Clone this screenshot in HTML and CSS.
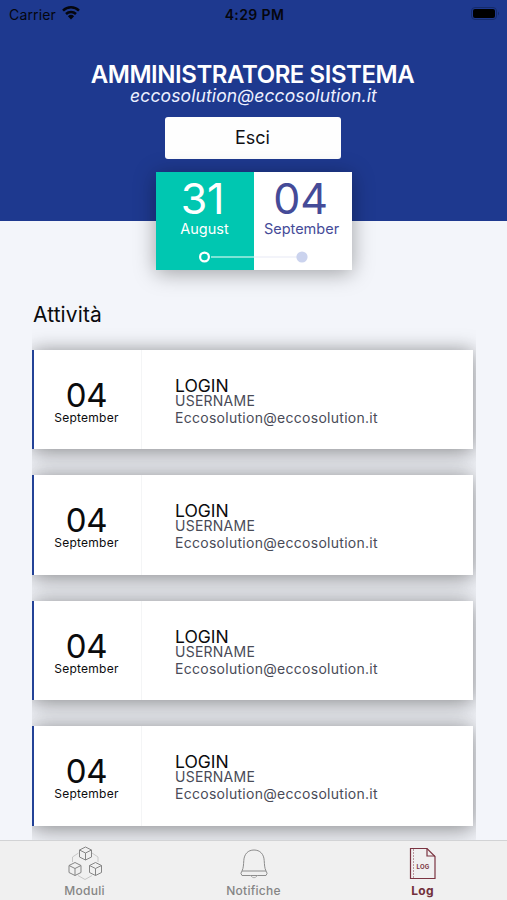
FILE: index.html
```html
<!DOCTYPE html>
<html lang="it">
<head>
<meta charset="utf-8">
<title>Log</title>
<link rel="stylesheet" href="styles.css">
</head>
<body>
<div class="app">
  <header class="hero">
    <div class="status">
      <span class="carrier">Carrier
        <svg class="wifi" width="18" height="14" viewBox="0 0 18 14" fill="none" stroke="#05060d" stroke-width="2.5"><path d="M1 4.6a11.5 11.5 0 0 1 16 0"/><path d="M4 8a7.2 7.2 0 0 1 10 0"/><path d="M9 13.4 5.9 10.3a4.5 4.5 0 0 1 6.2 0z" fill="#05060d" stroke="none"/></svg>
      </span>
      <span class="clock">4:29 PM</span>
      <svg class="battery" width="29" height="14" viewBox="0 0 29 14"><rect x=".5" y=".5" width="25" height="12" rx="3.5" fill="none" stroke="#152b6b"/><rect x="2" y="2" width="22" height="9" rx="2" fill="#000"/><path d="M27 4.5q2 2 0 4z" fill="#152b6b"/></svg>
    </div>
    <h1 class="name">AMMINISTRATORE SISTEMA</h1>
    <p class="mail">eccosolution@eccosolution.it</p>
    <button class="exit">Esci</button>
    <div class="range">
      <div class="day from"><span class="num">31</span><span class="month">August</span></div>
      <div class="day to"><span class="num">04</span><span class="month">September</span></div>
      <svg class="track" width="110" height="12" viewBox="0 0 110 12"><path d="M12 6h43" stroke="#a5eee3" stroke-width="1.5"/><path d="M55 6h43" stroke="#eff1f8" stroke-width="1.5"/><circle cx="5.500" cy="6" r="4.4" fill="#00c7b1" stroke="#fff" stroke-width="2.2"/><circle cx="103" cy="6" r="5.600" fill="#cbd3ee"/></svg>
    </div>
  </header>
  <main class="content">
    <h2 class="heading">Attività</h2>
    <div class="list">
      <article class="card"><div class="date"><span class="date-num">04</span><span class="date-month">September</span></div><div class="info"><h3>LOGIN</h3><p class="label">USERNAME</p><p class="value">Eccosolution@eccosolution.it</p></div></article>
      <article class="card"><div class="date"><span class="date-num">04</span><span class="date-month">September</span></div><div class="info"><h3>LOGIN</h3><p class="label">USERNAME</p><p class="value">Eccosolution@eccosolution.it</p></div></article>
      <article class="card"><div class="date"><span class="date-num">04</span><span class="date-month">September</span></div><div class="info"><h3>LOGIN</h3><p class="label">USERNAME</p><p class="value">Eccosolution@eccosolution.it</p></div></article>
      <article class="card"><div class="date"><span class="date-num">04</span><span class="date-month">September</span></div><div class="info"><h3>LOGIN</h3><p class="label">USERNAME</p><p class="value">Eccosolution@eccosolution.it</p></div></article>
    </div>
  </main>
  <nav class="tabs">
    <a class="tab">
      <svg width="36" height="36" viewBox="0 0 36 36" fill="none" stroke="#858585" stroke-width="1" stroke-linejoin="round">
        <defs><path id="cube" d="M0-6.500 6-3.500V3.500L0 6.500-6 3.500V-3.500zM-6-3.500 0-.5 6-3.500M0-.5V6.500"/></defs>
        <path d="M11.500 8 5.500 12v5M25 8l6 4v5M11 30.500l7 4 7-4" stroke="#bcbcbc" stroke-width=".8"/>
        <use href="#cube" x="18.500" y="8.500"/><use href="#cube" x="8" y="24"/><use href="#cube" x="28.500" y="24"/>
      </svg>
      <span>Moduli</span>
    </a>
    <a class="tab">
      <svg width="36" height="36" viewBox="0 0 36 36" fill="none" stroke="#8c8c8c" stroke-width="1" stroke-linejoin="round"><path d="M6 26C7.500 23 7.500 19.500 7.800 15.500 8.200 9 12 5 18 5s9.800 4 10.200 10.500c.3 4 .3 7.500 1.800 10.500"/><path d="M6 26h24q2.200 2.300 0 4.500H6q-2.200-2.200 0-4.500z"/><path d="M14.500 30.500q3.500 4.500 7 0" stroke="#b0b0b0"/></svg>
      <span>Notifiche</span>
    </a>
    <a class="tab active">
      <svg width="36" height="36" viewBox="0 0 36 36" fill="none" stroke="#7b3441" stroke-width="1.200"><path d="M5.500 3.500h16.500l8 8V33.500H5.500z"/><path d="M22 3.500v7.500h8"/><path d="M8.500 4v29" stroke-width=".8" stroke-dasharray="2 1" opacity=".6"/><text class="log-text" x="18" y="23.500" text-anchor="middle">LOG</text></svg>
      <span>Log</span>
    </a>
  </nav>
</div>
</body>
</html>
```
FILE: styles.css
```css
* { box-sizing: border-box; margin: 0; padding: 0; }
body { font-family: Inter, "Liberation Sans", sans-serif; background: #f3f5fa; color: #0b0b0d; }
.app { width: 507px; height: 900px; display: flex; flex-direction: column; overflow: hidden; }
.hero { height: 221px; flex: none; background: #1e398f; display: flex; flex-direction: column; align-items: center; }
.status { flex: none; width: 100%; height: 28px; display: grid; grid-template-columns: 1fr auto 1fr; align-items: center; padding: 0 7px 0 9px; color: #05060d; }
.carrier { display: flex; align-items: center; gap: 6px; font-size: 14px; letter-spacing: .15px; }
.wifi { margin-top: -2px; }
.clock { font-size: 14px; font-weight: 600; letter-spacing: .4px; }
.battery { justify-self: end; }
.name { margin: 32px 2px 0 0; font-size: 24px; line-height: 29px; font-weight: 600; letter-spacing: -.44px; color: #fff; white-space: nowrap; }
.mail { margin-top: -3px; font-size: 17.500px; line-height: 20px; font-style: italic; letter-spacing: .12px; color: #eef1ff; }
.exit { margin: 11px 2px 0 0; width: 176px; height: 42px; flex: none; border: 0; border-radius: 3px; background: #fefefe; font: 18px/42px Inter, sans-serif; color: #101014; }
.range { position: relative; flex: none; margin-top: 13px; width: 196px; height: 98px; display: grid; grid-template-columns: 1fr 1fr; box-shadow: 0 3px 20px rgba(0,0,0,.35); }
.day { display: flex; flex-direction: column; align-items: center; padding-top: 4px; }
.from { background: #00c7b1; color: #fff; }
.to { background: #fff; color: #454b98; }
.num { margin-right: 4px; font-size: 43px; line-height: 45px; letter-spacing: -.3px; }
.month { font-size: 14.500px; line-height: 16px; }
.to .month { margin-right: 2px; }
.track { position: absolute; left: 43px; top: 79px; }
.content { flex: 1; min-height: 0; padding: 80px 31px 0 32px; overflow: hidden; }
.heading { padding-left: 1px; font-size: 21px; line-height: 28px; font-weight: 400; letter-spacing: .1px; }
.list { margin-top: -9px; padding: 30px 3px 40px 0; overflow: hidden; display: flex; flex-direction: column; gap: 26px; }
.card { height: 99.400px; flex: none; display: flex; background: #fff; border-left: 2.500px solid #234297; box-shadow: 0 0 18px rgba(0,0,0,.34), 0 10px 24px rgba(0,0,0,.16); }
.date { width: 108px; border-right: 1px solid #f4f5f6; display: flex; flex-direction: column; align-items: center; padding: 27px 2px 0 0; }
.date-num { font-size: 33px; line-height: 36px; letter-spacing: -.4px; }
.date-month { font-size: 12px; line-height: 10px; letter-spacing: .25px; }
.info { padding: 27px 0 0 33px; }
.info h3 { font-size: 17.500px; line-height: 18px; font-weight: 400; }
.label { font-size: 14px; line-height: 12px; letter-spacing: .25px; color: #494b57; }
.value { margin-top: 2px; font-size: 14px; line-height: 18px; letter-spacing: .28px; color: #494b57; }
.tabs { position: relative; flex: none; height: 60px; background: #f0f0f0; border-top: 1px solid #d2d3d5; display: grid; grid-template-columns: repeat(3, 1fr); }
.tab { display: flex; flex-direction: column; align-items: center; padding-top: 4px; font-size: 12px; line-height: 20px; font-weight: 500; letter-spacing: .25px; color: #858585; }
.active { color: #71303b; font-weight: 700; }
.log-text { font: 700 6px Inter, sans-serif; fill: #7b3441; stroke: none; }
```
